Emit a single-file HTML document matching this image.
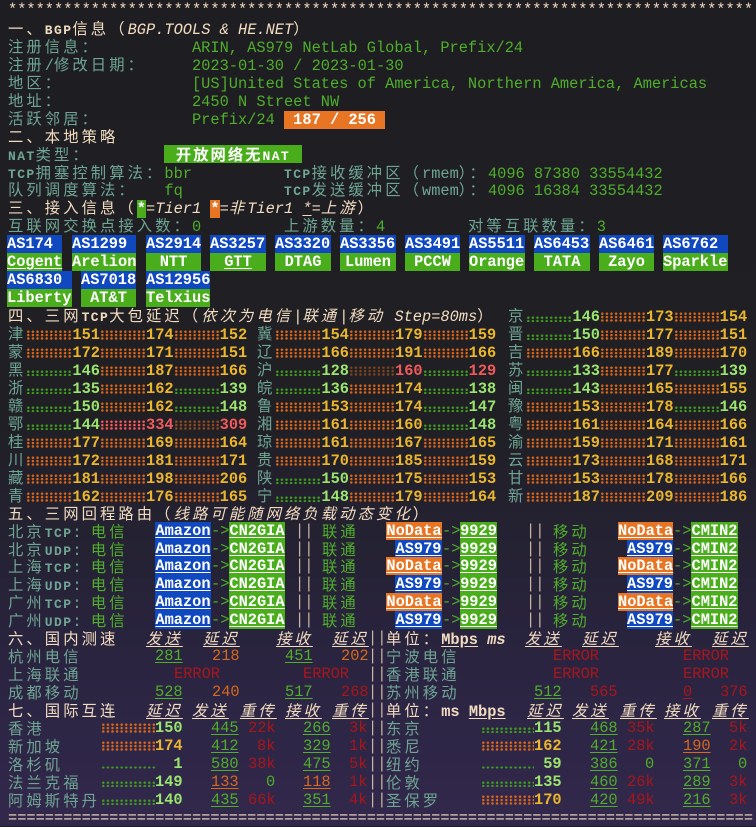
<!DOCTYPE html>
<html><head><meta charset="utf-8"><style>
body{margin:0;width:756px;height:826px;overflow:hidden;position:relative;background:linear-gradient(180deg,#1e1e22 0,#1f1f24 50%,#2a2440 80%,#32284c 100%);font:15.33px/18px "Liberation Mono","Noto Sans CJK SC",monospace;color:#6fa593}
.r{position:absolute;left:8px;white-space:pre;height:18px}
.a{position:absolute;white-space:pre;height:18px}
.c{letter-spacing:3.07px;font-family:"Noto Sans CJK SC",sans-serif}
.s{font-size:13px;font-weight:bold;letter-spacing:1.4px}
.h{color:#f2dcc0}.l{color:#6fa593}.g{color:#4fae2a}
.it{font-style:italic}
.u{text-decoration:underline}
.ob{background:#e87524;color:#fff;font-weight:bold}
.gb{background:#4aae1c;color:#fff;font-weight:bold}
.bb{background:#1048c0;color:#fff;font-weight:bold}
.bx{text-align:center;text-decoration:underline;text-underline-offset:2px}
i.o,i.q{display:inline-block;width:46px;height:10px;vertical-align:-1px;background:radial-gradient(circle,#dc671a 0 1.1px,transparent 1.4px) 0 0/4.6px 3.4px}
i.q{height:6px;vertical-align:-1px;background:radial-gradient(circle,#3f9c1e 0 1.1px,transparent 1.4px) 0 0/4.6px 3.4px}
b{font-weight:bold}
.y{color:#ecb62c;font-weight:bold}.n{color:#9be56f;font-weight:bold}.x{color:#f05a5a;font-weight:bold}
.sp{display:inline-block;width:9.2px}
.dr{color:#a8161c}.or{color:#d4691f}.bar{color:#c8b4a0}
.ul{text-decoration:underline;text-underline-offset:2px}
</style></head><body>
<div class="r h" style="top:1px">*********************************************************************************</div>
<div class="r h" style="top:19px"><span class="c">一、</span><span class="s">BGP</span><span class="c">信息（</span><span class="it">BGP.TOOLS &amp; HE.NET</span><span class="c">）</span></div>
<div class="r" style="top:37px"><span class="c">注册信息：</span>          <span class="g">ARIN, AS979 NetLab Global, Prefix/24</span></div>
<div class="r" style="top:55px"><span class="c">注册</span>/<span class="c">修改日期：</span>     <span class="g">2023-01-30 / 2023-01-30</span></div>
<div class="r" style="top:73px"><span class="c">地区：</span>              <span class="g">[US]United States of America, Northern America, Americas</span></div>
<div class="r" style="top:91px"><span class="c">地址：</span>              <span class="g">2450 N Street NW</span></div>
<div class="r" style="top:109px"><span class="c">活跃邻居：</span>          <span class="g">Prefix/24 </span><span class="ob"> 187 / 256 </span></div>
<div class="r h" style="top:127px"><span class="c">二、本地策略</span></div>
<div class="r" style="top:145px"><span class="s">NAT</span><span class="c">类型：</span></div>
<div class="a gb" style="left:164px;top:145px;width:138px;text-align:center"><span class="c" style="letter-spacing:2px">开放网络无</span><span class="s">NAT</span></div>
<div class="r" style="top:163px"><span class="s">TCP</span><span class="c">拥塞控制算法：</span><span class="g">bbr</span>          <span class="s">TCP</span><span class="c">接收缓冲区（</span>rmem<span class="c">）：</span><span class="g">4096 87380 33554432</span></div>
<div class="r" style="top:180px"><span class="c">队列调度算法：</span>   <span class="g">fq</span>           <span class="s">TCP</span><span class="c">发送缓冲区（</span>wmem<span class="c">）：</span><span class="g">4096 16384 33554432</span></div>
<div class="r h" style="top:198px"><span class="c">三、接入信息（</span><span class="gb">*</span><span class="it">=Tier1 </span><span class="ob">*</span><span class="it">=<span class="c">非</span>Tier1 <span class="ul">*</span>=<span class="c">上游</span></span><span class="c">）</span></div>
<div class="r" style="top:216px"><span class="c">互联网交换点接入数：</span><span class="g">0</span>         <span class="c">上游数量：</span><span class="g">4</span>         <span class="c">对等互联数量：</span><span class="g">3</span></div>

<div class="a bb" style="left:7px;top:235px;width:55px">AS174</div><div class="a gb bx" style="left:7px;top:253px;width:55px;text-align:left">Cogent</div>
<div class="a bb" style="left:72px;top:235px;width:64px">AS1299</div><div class="a gb" style="left:72px;top:253px;width:64px">Arelion</div>
<div class="a bb" style="left:146px;top:235px;width:55px">AS2914</div><div class="a gb" style="left:146px;top:253px;width:55px;text-align:center">NTT</div>
<div class="a bb" style="left:210px;top:235px;width:56px">AS3257</div><div class="a gb bx" style="left:210px;top:253px;width:56px">GTT</div>
<div class="a bb" style="left:275px;top:235px;width:56px">AS3320</div><div class="a gb" style="left:275px;top:253px;width:56px;text-align:center">DTAG</div>
<div class="a bb" style="left:340px;top:235px;width:56px">AS3356</div><div class="a gb" style="left:340px;top:253px;width:56px;text-align:center">Lumen</div>
<div class="a bb" style="left:405px;top:235px;width:55px">AS3491</div><div class="a gb" style="left:405px;top:253px;width:55px;text-align:center">PCCW</div>
<div class="a bb" style="left:469px;top:235px;width:56px">AS5511</div><div class="a gb" style="left:469px;top:253px;width:56px">Orange</div>
<div class="a bb" style="left:534px;top:235px;width:56px">AS6453</div><div class="a gb" style="left:534px;top:253px;width:56px;text-align:center">TATA</div>
<div class="a bb" style="left:599px;top:235px;width:55px">AS6461</div><div class="a gb" style="left:599px;top:253px;width:55px;text-align:center">Zayo</div>
<div class="a bb" style="left:663px;top:235px;width:65px">AS6762</div><div class="a gb" style="left:663px;top:253px;width:65px">Sparkle</div>
<div class="a bb" style="left:7px;top:271px;width:65px">AS6830</div><div class="a gb" style="left:7px;top:289px;width:65px">Liberty</div>
<div class="a bb" style="left:81px;top:271px;width:55px">AS7018</div><div class="a gb" style="left:81px;top:289px;width:55px;text-align:center">AT&amp;T</div>
<div class="a bb" style="left:146px;top:271px;width:64px">AS12956</div><div class="a gb" style="left:146px;top:289px;width:64px">Telxius</div>

<div class="r h" style="top:306px"><span class="c">四、三网</span><span class="s">TCP</span><span class="c">大包延迟（</span><span class="it"><span class="c">依次为电信</span>|<span class="c">联通</span>|<span class="c">移动</span> Step=80ms</span><span class="c">）</span></div>
<div class="a" style="left:508px;top:306px"><span class="c">京</span><i class="q"></i><span class="n">146</span><i class="o"></i><span class="y">173</span><i class="o"></i><span class="y">154</span></div>

<div class="r" style="top:324px"><span class="c">津</span><i class="o"></i><span class="y">151</span><i class="o"></i><span class="y">174</span><i class="o"></i><span class="y">152</span></div>
<div class="a" style="left:257px;top:324px"><span class="c">冀</span><i class="o"></i><span class="y">154</span><i class="o"></i><span class="y">179</span><i class="o"></i><span class="y">159</span></div>
<div class="a" style="left:508px;top:324px"><span class="c">晋</span><i class="q"></i><span class="n">150</span><i class="o"></i><span class="y">177</span><i class="o"></i><span class="y">151</span></div>

<div class="r" style="top:342px"><span class="c">蒙</span><i class="o"></i><span class="y">172</span><i class="o"></i><span class="y">171</span><i class="o"></i><span class="y">151</span></div>
<div class="a" style="left:257px;top:342px"><span class="c">辽</span><i class="o"></i><span class="y">166</span><i class="o"></i><span class="y">191</span><i class="o"></i><span class="y">166</span></div>
<div class="a" style="left:508px;top:342px"><span class="c">吉</span><i class="o"></i><span class="y">166</span><i class="o"></i><span class="y">189</span><i class="o"></i><span class="y">170</span></div>

<div class="r" style="top:360px"><span class="c">黑</span><i class="q"></i><span class="n">146</span><i class="o"></i><span class="y">187</span><i class="o"></i><span class="y">166</span></div>
<div class="a" style="left:257px;top:360px"><span class="c">沪</span><i class="q"></i><span class="n">128</span><i class="o" style="opacity:.5"></i><span class="x">160</span><i class="q"></i><span class="x">129</span></div>
<div class="a" style="left:508px;top:360px"><span class="c">苏</span><i class="q"></i><span class="n">133</span><i class="o"></i><span class="y">177</span><i class="q"></i><span class="n">139</span></div>

<div class="r" style="top:378px"><span class="c">浙</span><i class="q"></i><span class="n">135</span><i class="o"></i><span class="y">162</span><i class="q"></i><span class="n">139</span></div>
<div class="a" style="left:257px;top:378px"><span class="c">皖</span><i class="q"></i><span class="n">136</span><i class="o"></i><span class="y">174</span><i class="q"></i><span class="n">138</span></div>
<div class="a" style="left:508px;top:378px"><span class="c">闽</span><i class="q"></i><span class="n">143</span><i class="o"></i><span class="y">165</span><i class="o"></i><span class="y">155</span></div>

<div class="r" style="top:396px"><span class="c">赣</span><i class="q"></i><span class="n">150</span><i class="o"></i><span class="y">162</span><i class="q"></i><span class="n">148</span></div>
<div class="a" style="left:257px;top:396px"><span class="c">鲁</span><i class="o"></i><span class="y">153</span><i class="o"></i><span class="y">174</span><i class="q"></i><span class="n">147</span></div>
<div class="a" style="left:508px;top:396px"><span class="c">豫</span><i class="o"></i><span class="y">153</span><i class="o"></i><span class="y">178</span><i class="q"></i><span class="n">146</span></div>

<div class="r" style="top:414px"><span class="c">鄂</span><i class="q"></i><span class="n">144</span><i class="o" style="filter:hue-rotate(-30deg)"></i><span class="x">334</span><i class="o" style="opacity:.6"></i><span class="x">309</span></div>
<div class="a" style="left:257px;top:414px"><span class="c">湘</span><i class="o"></i><span class="y">161</span><i class="o"></i><span class="y">160</span><i class="q"></i><span class="n">148</span></div>
<div class="a" style="left:508px;top:414px"><span class="c">粤</span><i class="o"></i><span class="y">161</span><i class="o"></i><span class="y">164</span><i class="o"></i><span class="y">166</span></div>

<div class="r" style="top:432px"><span class="c">桂</span><i class="o"></i><span class="y">177</span><i class="o"></i><span class="y">169</span><i class="o"></i><span class="y">164</span></div>
<div class="a" style="left:257px;top:432px"><span class="c">琼</span><i class="o"></i><span class="y">161</span><i class="o"></i><span class="y">167</span><i class="o"></i><span class="y">165</span></div>
<div class="a" style="left:508px;top:432px"><span class="c">渝</span><i class="o"></i><span class="y">159</span><i class="o"></i><span class="y">171</span><i class="o"></i><span class="y">161</span></div>

<div class="r" style="top:450px"><span class="c">川</span><i class="o"></i><span class="y">172</span><i class="o"></i><span class="y">181</span><i class="o"></i><span class="y">171</span></div>
<div class="a" style="left:257px;top:450px"><span class="c">贵</span><i class="o"></i><span class="y">170</span><i class="o"></i><span class="y">185</span><i class="o"></i><span class="y">159</span></div>
<div class="a" style="left:508px;top:450px"><span class="c">云</span><i class="o"></i><span class="y">173</span><i class="o"></i><span class="y">168</span><i class="o"></i><span class="y">171</span></div>

<div class="r" style="top:468px"><span class="c">藏</span><i class="o"></i><span class="y">181</span><i class="o"></i><span class="y">198</span><i class="o"></i><span class="y">206</span></div>
<div class="a" style="left:257px;top:468px"><span class="c">陕</span><i class="q"></i><span class="n">150</span><i class="o"></i><span class="y">175</span><i class="o"></i><span class="y">153</span></div>
<div class="a" style="left:508px;top:468px"><span class="c">甘</span><i class="o"></i><span class="y">153</span><i class="o"></i><span class="y">178</span><i class="o"></i><span class="y">166</span></div>

<div class="r" style="top:486px"><span class="c">青</span><i class="o"></i><span class="y">162</span><i class="o"></i><span class="y">176</span><i class="o"></i><span class="y">165</span></div>
<div class="a" style="left:257px;top:486px"><span class="c">宁</span><i class="q"></i><span class="n">148</span><i class="o"></i><span class="y">179</span><i class="o"></i><span class="y">164</span></div>
<div class="a" style="left:508px;top:486px"><span class="c">新</span><i class="o"></i><span class="y">187</span><i class="o"></i><span class="y">209</span><i class="o"></i><span class="y">186</span></div>

<div class="r h" style="top:504px"><span class="c">五、三网回程路由（</span><span class="it c">线路可能随网络负载动态变化</span><span class="c">）</span></div>

<!-- route rows -->
<div class="r" style="top:522px"><span class="c">北京</span><span class="s">TCP</span>: <span class="c g">电信</span></div>
<div class="r" style="top:540px"><span class="c">北京</span><span class="s">UDP</span>: <span class="c g">电信</span></div>
<div class="r" style="top:557px"><span class="c">上海</span><span class="s">TCP</span>: <span class="c g">电信</span></div>
<div class="r" style="top:575px"><span class="c">上海</span><span class="s">UDP</span>: <span class="c g">电信</span></div>
<div class="r" style="top:593px"><span class="c">广州</span><span class="s">TCP</span>: <span class="c g">电信</span></div>
<div class="r" style="top:611px"><span class="c">广州</span><span class="s">UDP</span>: <span class="c g">电信</span></div>

<div class="a bb bx" style="left:155px;top:522px;width:56px">Amazon</div><div class="a g" style="left:211px;top:522px">-&gt;</div><div class="a gb bx" style="left:229px;top:522px;width:56px">CN2GIA</div><div class="a bar" style="left:295px;top:522px">||</div><div class="a c g" style="left:322px;top:522px">联通</div>
<div class="a bb bx" style="left:155px;top:540px;width:56px">Amazon</div><div class="a g" style="left:211px;top:540px">-&gt;</div><div class="a gb bx" style="left:229px;top:540px;width:56px">CN2GIA</div><div class="a bar" style="left:295px;top:540px">||</div><div class="a c g" style="left:322px;top:540px">联通</div>
<div class="a bb bx" style="left:155px;top:557px;width:56px">Amazon</div><div class="a g" style="left:211px;top:557px">-&gt;</div><div class="a gb bx" style="left:229px;top:557px;width:56px">CN2GIA</div><div class="a bar" style="left:295px;top:557px">||</div><div class="a c g" style="left:322px;top:557px">联通</div>
<div class="a bb bx" style="left:155px;top:575px;width:56px">Amazon</div><div class="a g" style="left:211px;top:575px">-&gt;</div><div class="a gb bx" style="left:229px;top:575px;width:56px">CN2GIA</div><div class="a bar" style="left:295px;top:575px">||</div><div class="a c g" style="left:322px;top:575px">联通</div>
<div class="a bb bx" style="left:155px;top:593px;width:56px">Amazon</div><div class="a g" style="left:211px;top:593px">-&gt;</div><div class="a gb bx" style="left:229px;top:593px;width:56px">CN2GIA</div><div class="a bar" style="left:295px;top:593px">||</div><div class="a c g" style="left:322px;top:593px">联通</div>
<div class="a bb bx" style="left:155px;top:611px;width:56px">Amazon</div><div class="a g" style="left:211px;top:611px">-&gt;</div><div class="a gb bx" style="left:229px;top:611px;width:56px">CN2GIA</div><div class="a bar" style="left:295px;top:611px">||</div><div class="a c g" style="left:322px;top:611px">联通</div>

<div class="a ob bx" style="left:386px;top:522px;width:56px">NoData</div><div class="a g" style="left:442px;top:522px">-&gt;</div><div class="a gb bx" style="left:460px;top:522px;width:37px">9929</div><div class="a bar" style="left:526px;top:522px">||</div><div class="a c g" style="left:553px;top:522px">移动</div><div class="a ob bx" style="left:618px;top:522px;width:55px">NoData</div><div class="a g" style="left:673px;top:522px">-&gt;</div><div class="a gb bx" style="left:691px;top:522px;width:47px">CMIN2</div>
<div class="a bb bx" style="left:395px;top:540px;width:47px">AS979</div><div class="a g" style="left:442px;top:540px">-&gt;</div><div class="a gb bx" style="left:460px;top:540px;width:37px">9929</div><div class="a bar" style="left:526px;top:540px">||</div><div class="a c g" style="left:553px;top:540px">移动</div><div class="a bb bx" style="left:627px;top:540px;width:46px">AS979</div><div class="a g" style="left:673px;top:540px">-&gt;</div><div class="a gb bx" style="left:691px;top:540px;width:47px">CMIN2</div>
<div class="a ob bx" style="left:386px;top:557px;width:56px">NoData</div><div class="a g" style="left:442px;top:557px">-&gt;</div><div class="a gb bx" style="left:460px;top:557px;width:37px">9929</div><div class="a bar" style="left:526px;top:557px">||</div><div class="a c g" style="left:553px;top:557px">移动</div><div class="a ob bx" style="left:618px;top:557px;width:55px">NoData</div><div class="a g" style="left:673px;top:557px">-&gt;</div><div class="a gb bx" style="left:691px;top:557px;width:47px">CMIN2</div>
<div class="a bb bx" style="left:395px;top:575px;width:47px">AS979</div><div class="a g" style="left:442px;top:575px">-&gt;</div><div class="a gb bx" style="left:460px;top:575px;width:37px">9929</div><div class="a bar" style="left:526px;top:575px">||</div><div class="a c g" style="left:553px;top:575px">移动</div><div class="a bb bx" style="left:627px;top:575px;width:46px">AS979</div><div class="a g" style="left:673px;top:575px">-&gt;</div><div class="a gb bx" style="left:691px;top:575px;width:47px">CMIN2</div>
<div class="a ob bx" style="left:386px;top:593px;width:56px">NoData</div><div class="a g" style="left:442px;top:593px">-&gt;</div><div class="a gb bx" style="left:460px;top:593px;width:37px">9929</div><div class="a bar" style="left:526px;top:593px">||</div><div class="a c g" style="left:553px;top:593px">移动</div><div class="a ob bx" style="left:618px;top:593px;width:55px">NoData</div><div class="a g" style="left:673px;top:593px">-&gt;</div><div class="a gb bx" style="left:691px;top:593px;width:47px">CMIN2</div>
<div class="a bb bx" style="left:395px;top:611px;width:47px">AS979</div><div class="a g" style="left:442px;top:611px">-&gt;</div><div class="a gb bx" style="left:460px;top:611px;width:37px">9929</div><div class="a bar" style="left:526px;top:611px">||</div><div class="a c g" style="left:553px;top:611px">移动</div><div class="a bb bx" style="left:627px;top:611px;width:46px">AS979</div><div class="a g" style="left:673px;top:611px">-&gt;</div><div class="a gb bx" style="left:691px;top:611px;width:47px">CMIN2</div>

<!-- section 6 -->
<div class="r h" style="top:629px"><span class="c">六、国内测速</span></div>
<div class="a h it ul c" style="left:146px;top:629px">发送</div><div class="a h it ul c" style="left:203px;top:629px">延迟</div><div class="a h it ul c" style="left:276px;top:629px">接收</div><div class="a h it ul c" style="left:332px;top:629px">延迟</div>
<div class="a bar" style="left:368px;top:629px">||</div>
<div class="a h" style="left:386px;top:629px"><span class="c">单位：</span><span class="ul"><b>Mbps</b></span> <span class="it"><b>ms</b></span></div>
<div class="a h it ul c" style="left:525px;top:629px">发送</div><div class="a h it ul c" style="left:582px;top:629px">延迟</div><div class="a h it ul c" style="left:655px;top:629px">接收</div><div class="a h it ul c" style="left:712px;top:629px">延迟</div>

<div class="r" style="top:647px"><span class="c">杭州电信</span></div>
<div class="a g ul" style="left:155px;top:647px">281</div><div class="a or" style="left:212px;top:647px">218</div><div class="a g ul" style="left:285px;top:647px">451</div><div class="a or" style="left:341px;top:647px">202</div>
<div class="a bar" style="left:368px;top:647px">||</div><div class="a c" style="left:386px;top:647px">宁波电信</div><div class="a dr" style="left:553px;top:647px">ERROR</div><div class="a dr" style="left:683px;top:647px">ERROR</div>

<div class="r" style="top:665px"><span class="c">上海联通</span></div>
<div class="a dr" style="left:174px;top:665px">ERROR</div><div class="a dr" style="left:303px;top:665px">ERROR</div>
<div class="a bar" style="left:368px;top:665px">||</div><div class="a c" style="left:386px;top:665px">香港联通</div><div class="a dr" style="left:553px;top:665px">ERROR</div><div class="a dr" style="left:683px;top:665px">ERROR</div>

<div class="r" style="top:683px"><span class="c">成都移动</span></div>
<div class="a g ul" style="left:155px;top:683px">528</div><div class="a or" style="left:212px;top:683px">240</div><div class="a g ul" style="left:285px;top:683px">517</div><div class="a dr" style="left:341px;top:683px">268</div>
<div class="a bar" style="left:368px;top:683px">||</div><div class="a c" style="left:386px;top:683px">苏州移动</div><div class="a g ul" style="left:534px;top:683px">512</div><div class="a dr" style="left:590px;top:683px">565</div><div class="a dr ul" style="left:683px;top:683px">0</div><div class="a dr" style="left:720px;top:683px">376</div>

<!-- section 7 -->
<div class="r h" style="top:701px"><span class="c">七、国际互连</span></div>
<div class="a h it ul c" style="left:146px;top:701px">延迟</div><div class="a h it ul c" style="left:192px;top:701px">发送</div><div class="a h it ul c" style="left:240px;top:701px">重传</div><div class="a h it ul c" style="left:285px;top:701px">接收</div><div class="a h it ul c" style="left:332px;top:701px">重传</div>
<div class="a bar" style="left:368px;top:701px">||</div>
<div class="a h" style="left:386px;top:701px"><span class="c">单位：</span><b>ms</b> <span class="ul"><b>Mbps</b></span></div>
<div class="a h it ul c" style="left:527px;top:701px">延迟</div><div class="a h it ul c" style="left:572px;top:701px">发送</div><div class="a h it ul c" style="left:620px;top:701px">重传</div><div class="a h it ul c" style="left:664px;top:701px">接收</div><div class="a h it ul c" style="left:712px;top:701px">重传</div>

<div class="r" style="top:719px"><span class="c">香港</span></div>
<div class="a" style="left:101px;top:719px"><i class="o" style="width:54px"></i><span class="n">150</span></div>
<div class="a g ul" style="left:211px;top:719px">445</div><div class="a dr" style="left:248px;top:719px">22k</div><div class="a g ul" style="left:303px;top:719px">266</div><div class="a dr" style="left:349px;top:719px">3k</div>
<div class="r" style="top:737px"><span class="c">新加坡</span></div>
<div class="a" style="left:101px;top:737px"><i class="o" style="width:54px"></i><span class="y">174</span></div>
<div class="a g ul" style="left:211px;top:737px">412</div><div class="a dr" style="left:257px;top:737px">8k</div><div class="a g ul" style="left:303px;top:737px">329</div><div class="a dr" style="left:349px;top:737px">1k</div>
<div class="r" style="top:755px"><span class="c">洛杉矶</span></div>
<div class="a" style="left:101px;top:755px"><i class="q" style="width:54px;height:3px"></i><span class="n">  1</span></div>
<div class="a g ul" style="left:211px;top:755px">580</div><div class="a dr" style="left:248px;top:755px">38k</div><div class="a g ul" style="left:303px;top:755px">475</div><div class="a dr" style="left:349px;top:755px">5k</div>
<div class="r" style="top:773px"><span class="c">法兰克福</span></div>
<div class="a" style="left:101px;top:773px"><i class="q" style="width:54px"></i><span class="n">149</span></div>
<div class="a or ul" style="left:211px;top:773px">133</div><div class="a g" style="left:266px;top:773px">0</div><div class="a or ul" style="left:303px;top:773px">118</div><div class="a dr" style="left:349px;top:773px">1k</div>
<div class="r" style="top:791px"><span class="c">阿姆斯特丹</span></div>
<div class="a" style="left:101px;top:791px"><i class="q" style="width:54px"></i><span class="n">140</span></div>
<div class="a g ul" style="left:211px;top:791px">435</div><div class="a dr" style="left:248px;top:791px">66k</div><div class="a g ul" style="left:303px;top:791px">351</div><div class="a dr" style="left:349px;top:791px">4k</div>

<div class="a bar" style="left:368px;top:719px">||</div><div class="a c" style="left:386px;top:719px">东京</div>
<div class="a" style="left:481px;top:719px"><i class="q" style="width:53px"></i><span class="n">115</span></div>
<div class="a g ul" style="left:590px;top:719px">468</div><div class="a dr" style="left:627px;top:719px">35k</div><div class="a g ul" style="left:683px;top:719px">287</div><div class="a dr" style="left:729px;top:719px">5k</div>
<div class="a bar" style="left:368px;top:737px">||</div><div class="a c" style="left:386px;top:737px">悉尼</div>
<div class="a" style="left:481px;top:737px"><i class="o" style="width:53px"></i><span class="y">162</span></div>
<div class="a g ul" style="left:590px;top:737px">421</div><div class="a dr" style="left:627px;top:737px">28k</div><div class="a or ul" style="left:683px;top:737px">190</div><div class="a dr" style="left:729px;top:737px">2k</div>
<div class="a bar" style="left:368px;top:755px">||</div><div class="a c" style="left:386px;top:755px">纽约</div>
<div class="a" style="left:481px;top:755px"><i class="q" style="width:53px;height:3px"></i><span class="n"> 59</span></div>
<div class="a g ul" style="left:590px;top:755px">386</div><div class="a g" style="left:645px;top:755px">0</div><div class="a g ul" style="left:683px;top:755px">371</div><div class="a g" style="left:738px;top:755px">0</div>
<div class="a bar" style="left:368px;top:773px">||</div><div class="a c" style="left:386px;top:773px">伦敦</div>
<div class="a" style="left:481px;top:773px"><i class="q" style="width:53px"></i><span class="n">135</span></div>
<div class="a g ul" style="left:590px;top:773px">460</div><div class="a dr" style="left:627px;top:773px">26k</div><div class="a g ul" style="left:683px;top:773px">289</div><div class="a dr" style="left:729px;top:773px">3k</div>
<div class="a bar" style="left:368px;top:791px">||</div><div class="a c" style="left:386px;top:791px">圣保罗</div>
<div class="a" style="left:481px;top:791px"><i class="o" style="width:53px"></i><span class="y">170</span></div>
<div class="a g ul" style="left:590px;top:791px">420</div><div class="a dr" style="left:627px;top:791px">49k</div><div class="a g ul" style="left:683px;top:791px">216</div><div class="a dr" style="left:729px;top:791px">3k</div>

<div class="r h" style="top:809px">=================================================================================</div>
</body></html>
